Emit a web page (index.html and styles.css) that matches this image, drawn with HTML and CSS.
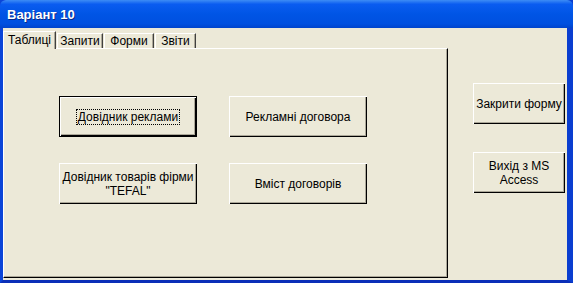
FILE: index.html
```html
<!DOCTYPE html>
<html>
  <head>
    <title>Варіант 10</title>
    <link rel="stylesheet" href="styles.css">
  </head>
  <body>
    <div class="window">
      <div class="titlebar">Варіант 10</div>
      <div class="client">
        <div class="tab-area">
          <div class="tabs">
            <div class="tab active">Таблиці</div>
            <div class="tab t-queries">Запити</div>
            <div class="tab t-forms">Форми</div>
            <div class="tab t-reports">Звіти</div>
          </div>
          <div class="tab-panel">
            <div class="grid">
              <button class="btn default"><span class="focus">Довідник реклами</span></button>
              <button class="btn">Рекламні договора</button>
              <button class="btn">Довідник товарів фірми<br>"TEFAL"</button>
              <button class="btn">Вміст договорів</button>
            </div>
          </div>
        </div>
        <div class="side">
          <button class="btn side-btn">Закрити форму</button>
          <button class="btn side-btn">Вихід з MS<br>Access</button>
        </div>
      </div>
    </div>
  </body>
</html>
```

FILE: styles.css
```css
html, body {
  margin: 0;
  padding: 0;
}
body {
  width: 573px;
  height: 283px;
  overflow: hidden;
  font-family: 'Liberation Sans', Arial, sans-serif;
  font-size: 11px;
  color: black;
}
.window {
  width: 573px;
  height: 283px;
  box-sizing: border-box;
  background: #0831d9;
  border-left: 3px solid #0b45d8;
  border-right: 6px solid #0a3ed0;
  border-bottom: 3px solid #0a2fb8;
  display: flex;
  flex-direction: column;
}
.titlebar {
  height: 28px;
  margin-left: -3px;
  margin-right: -6px;
  padding-left: 7px;
  box-sizing: border-box;
  background: linear-gradient(#3d8cf5 0%, #0a5cf0 15%, #0055e5 50%, #0050e0 85%, #0044cc 100%);
  color: white;
  font-weight: bold;
  font-size: 13px;
  line-height: 30px;
  text-shadow: 1px 1px 0 #0a2a8a;
  border-radius: 6px 6px 0 0;
}
.client {
  flex: 1;
  background: #ece9d8;
  display: flex;
}
.tab-area {
  width: 445px;
  display: flex;
  flex-direction: column;
}
.tabs {
  display: flex;
  align-items: flex-end;
  height: 19px;
  padding-top: 1px;
}
.tab {
  height: 15px;
  line-height: 15px;
  font-size: 12px;
  text-align: center;
  box-sizing: border-box;
  border-top: 1px solid white;
  border-left: 1px solid white;
  border-right: 1px solid #404040;
  box-shadow: inset -1px 0 0 #aca899;
  margin-right: 1px;
  background: #ece9d8;
}
.tab.active {
  height: 18px;
  line-height: 17px;
  width: 53px;
  margin-right: 1px;
  margin-bottom: -1px;
  position: relative;
  z-index: 1;
}
.t-queries {
  width: 46px;
}
.t-forms {
  width: 50px;
}
.t-reports {
  width: 41px;
}
.tab-panel {
  flex: 1;
  margin-bottom: 2px;
  border-top: 1px solid white;
  border-left: 1px solid white;
  border-right: 1px solid #000;
  border-bottom: 1px solid #000;
  box-shadow: inset -1px -1px 0 #aca899;
}
.grid {
  display: grid;
  grid-template-columns: 138px 138px;
  grid-auto-rows: 41px;
  column-gap: 32px;
  row-gap: 26px;
  padding: 47px 0 0 55px;
}
.btn {
  font-family: 'Liberation Sans', Arial, sans-serif;
  font-size: 12px;
  color: black;
  background: #ece9d8;
  border: none;
  padding: 0;
  margin: 0;
  box-shadow: inset 1px 1px 0 white, inset -1px -1px 0 black, inset -2px -2px 0 #aca899;
  line-height: 14px;
  display: flex;
  align-items: center;
  justify-content: center;
  text-align: center;
}
.btn.default {
  box-shadow: inset 0 0 0 1px black, inset 2px 2px 0 white, inset -2px -2px 0 black, inset -3px -3px 0 #aca899;
}
.focus {
  outline: 1px dotted black;
  padding: 0 1px;
}
.side {
  flex: 1;
  display: flex;
  flex-direction: column;
  padding: 55px 0 0 25px;
  gap: 28px;
}
.side-btn {
  width: 92px;
  height: 41px;
}
```
